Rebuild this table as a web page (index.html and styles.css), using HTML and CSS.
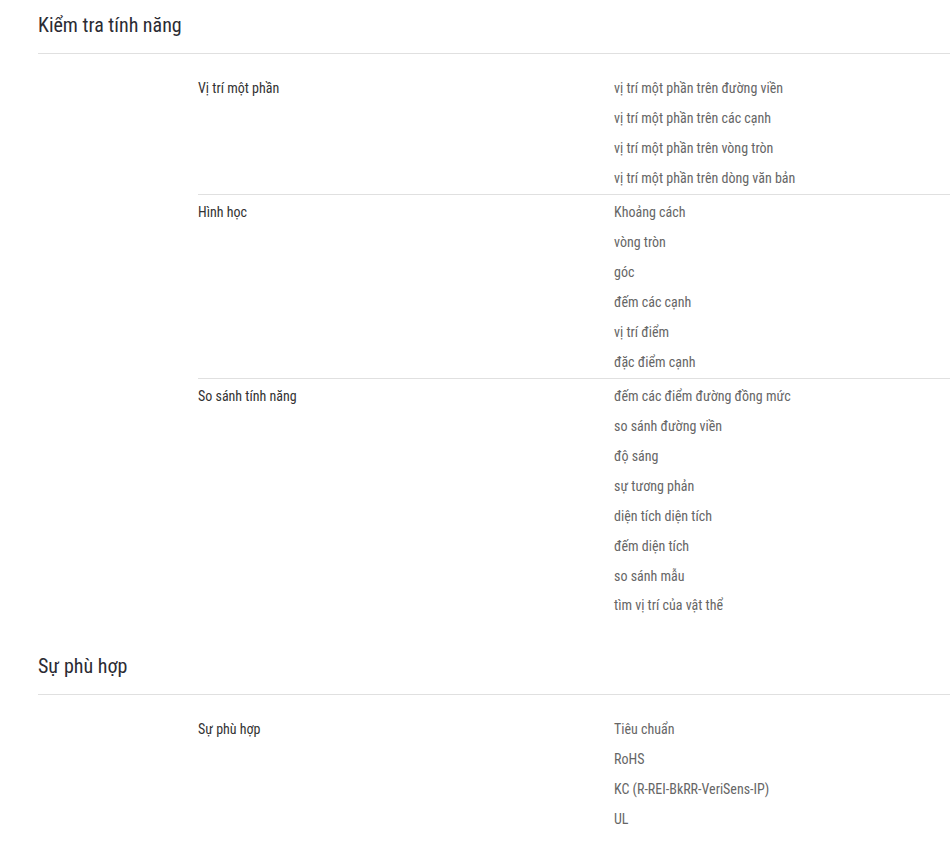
FILE: index.html
```html
<!DOCTYPE html>
<html lang="vi">
<head>
    <meta charset="UTF-8">
    <meta name="viewport" content="width=device-width, initial-scale=1.0">
    <title>Thông số kỹ thuật</title>
    <link rel="stylesheet" href="styles.css">
</head>
<body>
    <div class="specs">
        <div class="spec-section">
            <h2 class="spec-title">Kiểm tra tính năng</h2>
            <div class="spec-table">
                <div class="spec-group">
                    <div class="spec-label">Vị trí một phần</div>
                    <ul class="spec-values">
                        <li>vị trí một phần trên đường viền</li>
                        <li>vị trí một phần trên các cạnh</li>
                        <li>vị trí một phần trên vòng tròn</li>
                        <li>vị trí một phần trên dòng văn bản</li>
                    </ul>
                </div>
                <div class="spec-group">
                    <div class="spec-label">Hình học</div>
                    <ul class="spec-values">
                        <li>Khoảng cách</li>
                        <li>vòng tròn</li>
                        <li>góc</li>
                        <li>đếm các cạnh</li>
                        <li>vị trí điểm</li>
                        <li>đặc điểm cạnh</li>
                    </ul>
                </div>
                <div class="spec-group">
                    <div class="spec-label">So sánh tính năng</div>
                    <ul class="spec-values">
                        <li>đếm các điểm đường đồng mức</li>
                        <li>so sánh đường viền</li>
                        <li>độ sáng</li>
                        <li>sự tương phản</li>
                        <li>diện tích diện tích</li>
                        <li>đếm diện tích</li>
                        <li>so sánh mẫu</li>
                        <li>tìm vị trí của vật thể</li>
                    </ul>
                </div>
            </div>
        </div>
        <div class="spec-section">
            <h2 class="spec-title">Sự phù hợp</h2>
            <div class="spec-table">
                <div class="spec-group">
                    <div class="spec-label">Sự phù hợp</div>
                    <ul class="spec-values">
                        <li>Tiêu chuẩn</li>
                        <li>RoHS</li>
                        <li>KC (R-REI-BkRR-VeriSens-IP)</li>
                        <li>UL</li>
                    </ul>
                </div>
            </div>
        </div>
    </div>
</body>
</html>
```

FILE: styles.css
```css
body{
    margin: 0;
    background-color: white;
    font-family: Roboto, "Liberation Sans", sans-serif;
    font-stretch: 87.5%;
    color: #333;
}
.specs{
    padding: 10px 0px 0px 38px;
}
.spec-section{
    margin-bottom: 29px;
}
.spec-title{
    margin: 0px;
    padding-bottom: 13px;
    border-bottom: 1px solid #e0e0e0;
    font-size: 20px;
    line-height: 30px;
    font-weight: 400;
    color: #2b2b33;
}
.spec-table{
    margin-top: 17px;
    padding-left: 160px;
}
.spec-group{
    display: grid;
    grid-template-columns: 416px 1fr;
    padding: 3px 0px 1px 0px;
    font-size: 14px;
    line-height: 29.85px;
}
.spec-group + .spec-group{
    border-top: 1px solid #e0e0e0;
}
.spec-label{
    color: #333;
}
.spec-values{
    list-style: none;
    margin: 0px;
    padding: 0px;
    color: #666;
}
```
